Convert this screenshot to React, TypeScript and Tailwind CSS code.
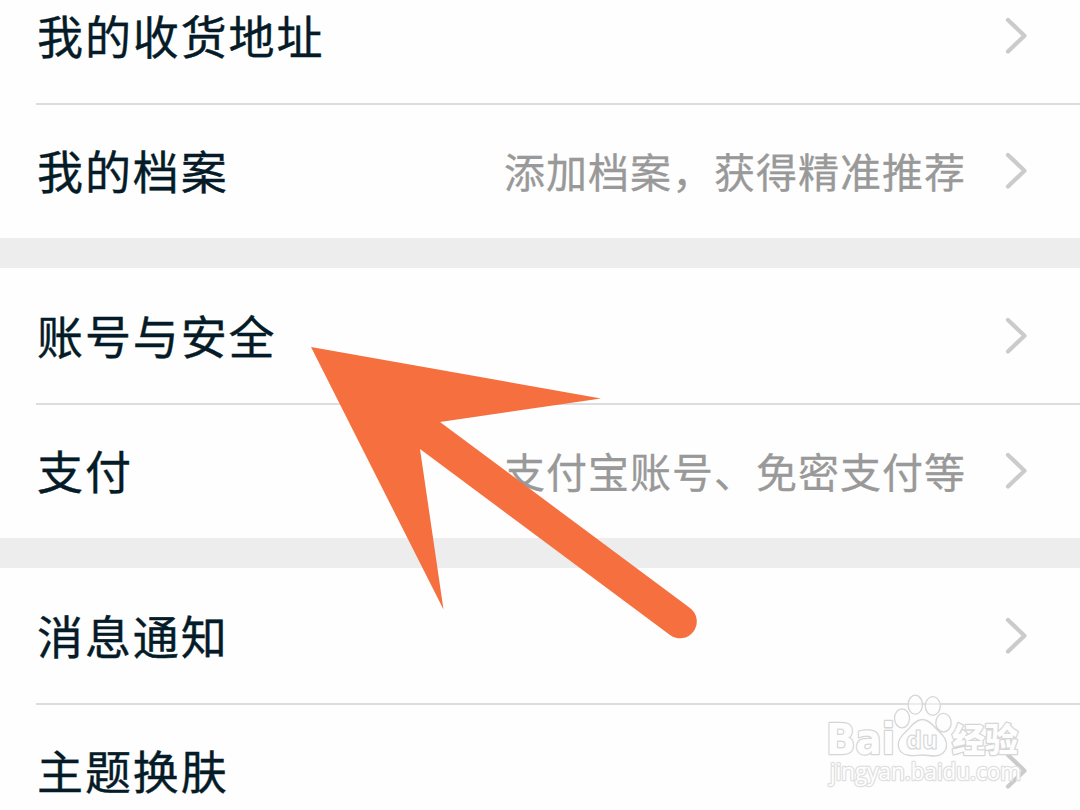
import React from "react";

type Item = { label: string; detail?: string };

const groups: [Item, Item][] = [
  [{ label: "我的收货地址" }, { label: "我的档案", detail: "添加档案，获得精准推荐" }],
  [{ label: "账号与安全" }, { label: "支付", detail: "支付宝账号、免密支付等" }],
  [{ label: "消息通知" }, { label: "主题换肤" }],
];

function Chevron() {
  return (
    <svg className="ml-[37px] h-10 w-7 shrink-0" viewBox="0 0 28 40" fill="none">
      <path d="M5 4 L21.500 19.700 L5 35.500" stroke="#cbcbcb" strokeWidth="4.200" strokeLinecap="round" strokeLinejoin="round" />
    </svg>
  );
}

function Row({ item, tall }: { item: Item; tall?: boolean }) {
  return (
    <div className={`flex shrink-0 items-center pl-[37px] pr-[49px] ${tall ? "h-[135px]" : "h-[133px] pb-0.5"}`}>
      <span className="pb-1 text-[46px] leading-[70px] tracking-[1.9px] text-[#051b28] [-webkit-text-stroke:0.4px_#051b28]">{item.label}</span>
      <span className="ml-auto pb-px text-[41px] leading-[60px] tracking-[1px] text-[#999999] [-webkit-text-stroke:0.3px_#999999]">{item.detail}</span>
      <Chevron />
    </div>
  );
}

function Arrow() {
  return (
    <svg className="absolute left-0 top-0" width="1080" height="810" viewBox="0 0 1080 810">
      <path
        d="M311 347 L601 398.500 L440 422 L690 608 A16.500 16.500 0 0 1 670 635 L420 449 L443.500 609.500 Z"
        fill="#f66f3f"
      />
    </svg>
  );
}

function Watermark() {
  return (
    <svg
      className="absolute left-[820px] top-[690px]"
      width="220"
      height="110"
      viewBox="820 690 220 110"
      fill="#fefefe"
      stroke="#d6d6d6"
      strokeWidth="1.3"
      strokeLinejoin="round"
    >
      <g fillOpacity="0.5">
        <ellipse cx="915.300" cy="704.700" rx="7.200" ry="9.500" />
        <ellipse cx="932.800" cy="706" rx="7.500" ry="9.300" />
        <ellipse cx="902" cy="718.300" rx="7.500" ry="9.500" />
        <ellipse cx="943.500" cy="722.700" rx="7.700" ry="9.300" />
      </g>
      <path d="M922.500 719.500 C930 719.500 934 727 939 731.500 C944 736 947 740 946.500 746 C946 752 941 756 934.500 756 C930 756 927 755 922.500 755 C918 755 914 756 910 755.500 C903 755 898.500 751 898.300 745 C898 739 902 735 906.500 731 C911 727 915 719.500 922.500 719.500 Z" />
      <g fontFamily="DejaVu Sans, sans-serif" fontWeight="700">
        <text x="826" y="754" fontSize="42" textLength="69" lengthAdjust="spacingAndGlyphs" paintOrder="stroke" strokeWidth="2.600">Bai</text>
        <text x="906" y="749" fontSize="24" textLength="32" lengthAdjust="spacingAndGlyphs" strokeWidth="1.200">du</text>
      </g>
      <text x="952" y="752" fontSize="33" fontWeight="900" fontFamily="Noto Sans CJK SC, sans-serif" paintOrder="stroke" strokeWidth="2.600">经验</text>
      <text x="830" y="780" fontSize="23" fontFamily="Open Sans, sans-serif" textLength="191" lengthAdjust="spacingAndGlyphs" paintOrder="stroke" stroke="#e0e0e0" strokeWidth="2.600">jingyan.baidu.com</text>
    </svg>
  );
}

export default function App() {
  return (
    <div className="relative h-[810px] w-[1080px] overflow-hidden bg-[#fefefe] font-['Noto_Sans_CJK_SC',sans-serif]">
      <div className="-mt-8 flex flex-col">
        {groups.map(([first, second], i) => (
          <React.Fragment key={first.label}>
            {i > 0 && <div className="h-[30px] shrink-0 bg-[#ededed]" />}
            <Row item={first} tall />
            <div className="ml-9 h-0.5 shrink-0 bg-[#dddddd]" />
            <Row item={second} />
          </React.Fragment>
        ))}
      </div>
      <Arrow />
      <Watermark />
    </div>
  );
}
